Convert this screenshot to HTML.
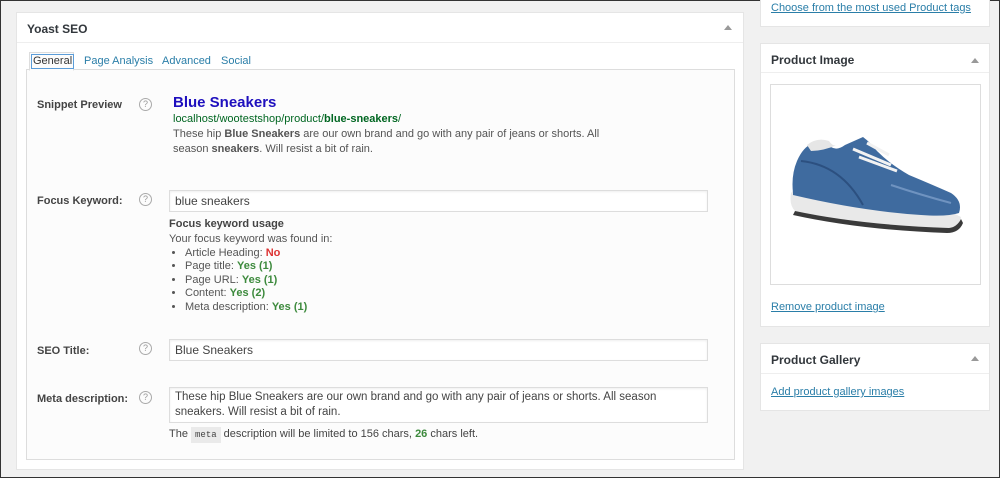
<!DOCTYPE html>
<html><head><style>
body{margin:0;width:1000px;height:478px;background:#f1f1f1;font-family:"Liberation Sans",sans-serif;font-size:11px;color:#444;position:relative;overflow:hidden;box-sizing:border-box;border:1px solid #333}
.abs{position:absolute}
.panel{position:absolute;background:#fff;border:1px solid #e5e5e5}
.h{font-weight:bold;font-size:12px;color:#32373c}
.tri{position:absolute;width:0;height:0;border-left:4px solid transparent;border-right:4px solid transparent;border-bottom:5px solid #999}
a,.lnk{color:#2a7ea8;text-decoration:underline}
.lbl{position:absolute;left:36px;font-weight:bold;color:#444;font-size:11px}
.q{position:absolute;left:138px;width:11px;height:11px;border:1px solid #aaa;border-radius:50%;font-size:9px;line-height:11px;text-align:center;color:#999}
.inp{position:absolute;left:168px;width:539px;border:1px solid #ddd;background:#fff;box-shadow:inset 0 1px 2px rgba(0,0,0,.07);font-size:12px;color:#444;padding:0 5px;box-sizing:border-box}
.g{color:#3d8a3d;font-weight:bold}
ul{margin:0;padding-left:16px}
</style></head><body>
<div class="panel" style="left:15px;top:11px;width:726px;height:456px">
<div class="h abs" style="left:10px;top:9px">Yoast SEO</div>
<div class="tri" style="left:707px;top:12px"></div>
<div class="abs" style="left:0;top:29px;width:726px;border-top:1px solid #eee"></div>
<div class="abs" style="left:9px;top:56px;width:707px;height:389px;border:1px solid #ddd;background:#fcfcfc"></div>
<div class="abs" style="left:12px;top:39px;width:43px;height:17px;border:1px solid #ddd;border-bottom:1px solid #fcfcfc;background:#fcfcfc"></div>
<div class="abs" style="left:14px;top:41px;padding:0 1px;border:1px solid #5b9dd9;font-size:11px;color:#333;line-height:13px">General</div>
<div class="abs" style="left:67px;top:42px;color:#2a7ea8">Page Analysis</div>
<div class="abs" style="left:145px;top:42px;color:#2a7ea8">Advanced</div>
<div class="abs" style="left:204px;top:42px;color:#2a7ea8">Social</div>
</div>
<div class="lbl" style="top:98px">Snippet Preview</div><div class="q" style="top:97px">?</div>
<div class="abs" style="left:172px;top:93px;font-size:15px;font-weight:bold;color:#1e0fbe">Blue Sneakers</div>
<div class="abs" style="left:172px;top:112px;font-size:11px;color:#006621">localhost/wootestshop/product/<b>blue-sneakers</b>/</div>
<div class="abs" style="left:172px;top:126px;font-size:11px;color:#545454;line-height:15px;width:440px">These hip <b>Blue Sneakers</b> are our own brand and go with any pair of jeans or shorts. All season <b>sneakers</b>. Will resist a bit of rain.</div>
<div class="lbl" style="top:194px">Focus Keyword:</div><div class="q" style="top:192px">?</div>
<div class="inp" style="top:189px;height:22px;line-height:21px">blue sneakers</div>
<div class="abs" style="left:168px;top:217px;font-weight:bold;font-size:11px;color:#444">Focus keyword usage</div>
<div class="abs" style="left:168px;top:232px;line-height:13.5px;font-size:11px;color:#555">Your focus keyword was found in:
<ul><li>Article Heading: <b style="color:#d33">No</b></li><li>Page title: <span class="g">Yes (1)</span></li><li>Page URL: <span class="g">Yes (1)</span></li><li>Content: <span class="g">Yes (2)</span></li><li>Meta description: <span class="g">Yes (1)</span></li></ul></div>
<div class="lbl" style="top:344px">SEO Title:</div><div class="q" style="top:341px">?</div>
<div class="inp" style="top:338px;height:22px;line-height:21px">Blue Sneakers</div>
<div class="lbl" style="top:392px">Meta description:</div><div class="q" style="top:390px">?</div>
<div class="inp" style="top:386px;height:36px;line-height:15px;padding-top:2px;font-size:11.5px">These hip Blue Sneakers are our own brand and go with any pair of jeans or shorts. All season sneakers. Will resist a bit of rain.</div>
<div class="abs" style="left:168px;top:426px;font-size:11px;color:#444;line-height:14px">The <span style="background:#eaeaea;font-family:'Liberation Mono',monospace;font-size:9px;padding:3px 4px">meta</span> description will be limited to 156 chars, <span class="g">26</span> chars left.</div>

<div class="panel" style="left:759px;top:-2px;width:228px;height:26px"><span class="lnk abs" style="left:10px;top:2px;font-size:11px">Choose from the most used Product tags</span></div>
<div class="panel" style="left:759px;top:42px;width:228px;height:282px">
<div class="h abs" style="left:10px;top:9px">Product Image</div><div class="tri" style="left:210px;top:14px"></div>
<div class="abs" style="left:0;top:28px;width:228px;border-top:1px solid #eee"></div>
<div class="abs" style="left:9px;top:40px;width:209px;height:199px;border:1px solid #ddd;background:#fff">
<svg width="209" height="199" viewBox="0 0 209 199">
<path d="M20 108 Q18 120 24 126 Q90 140 178 143 Q190 140 190 132 L182 128 Q110 124 22 106 Z" fill="#e9e9e9"/>
<path d="M24 126 Q90 140 178 143 Q186 142 190 134 L192 138 Q188 148 176 148 Q90 145 22 130 Z" fill="#3a3a3a"/>
<path d="M22 108 Q20 90 26 76 Q32 62 42 58 Q52 56 60 62 Q66 66 74 60 L92 52 Q100 58 106 66 Q120 80 138 90 Q162 100 180 108 Q192 116 188 128 Q176 132 150 130 Q90 126 22 110 Z" fill="#3f6b9f"/>
<path d="M36 60 Q46 52 58 56 Q62 62 66 60 Q52 66 40 66 Z" fill="#e6e6e6"/>
<path d="M82 64 L120 80 M88 72 L126 86 M96 58 L118 70" stroke="#f2f2f2" stroke-width="3"/>
<path d="M30 76 Q70 80 92 120" stroke="#2c5080" stroke-width="2" fill="none"/>
<path d="M120 100 Q150 110 180 118" stroke="#6f93c0" stroke-width="2" fill="none"/>
</svg></div>
<span class="lnk abs" style="left:10px;top:257px;font-size:11px">Remove product image</span>
</div>
<div class="panel" style="left:759px;top:342px;width:228px;height:66px">
<div class="h abs" style="left:10px;top:9px">Product Gallery</div><div class="tri" style="left:210px;top:12px"></div>
<div class="abs" style="left:0;top:29px;width:228px;border-top:1px solid #eee"></div>
<span class="lnk abs" style="left:10px;top:42px;font-size:11px">Add product gallery images</span>
</div>
</body></html>
